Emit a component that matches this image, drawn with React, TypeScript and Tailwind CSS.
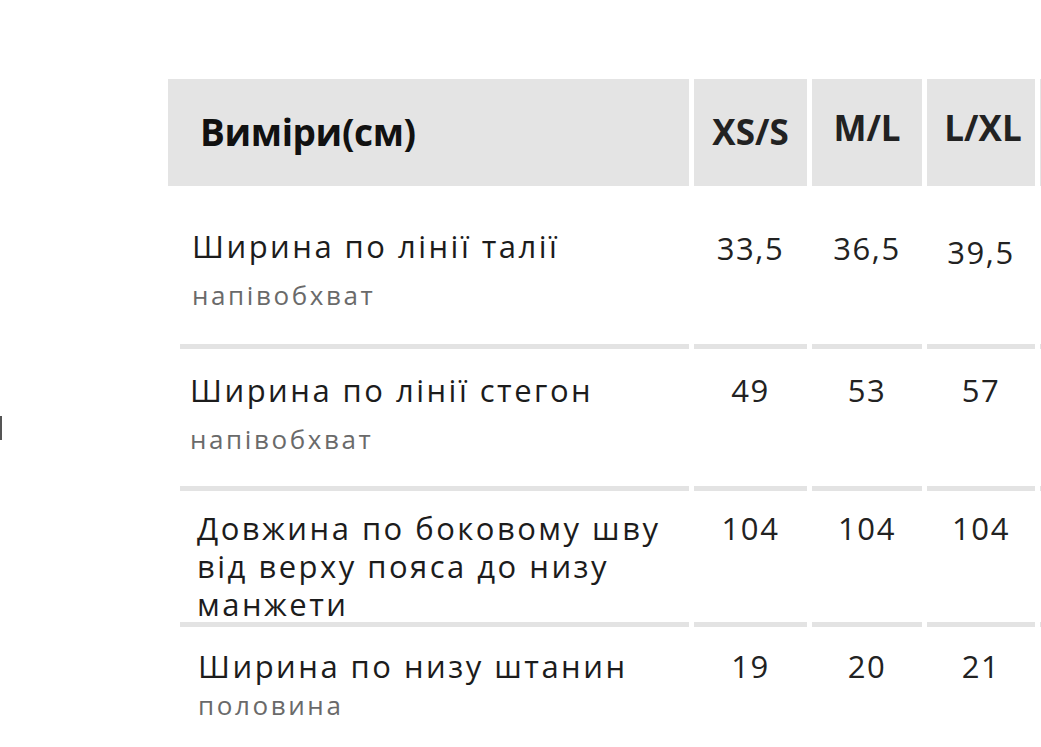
import React from 'react';

type Row = {
  lines: string[];
  sub?: string;
  values: string[];
  pt: string;
  pl: string;
  subGap: string;
  h: string;
  valuePt: string[];
};

const rows: Row[] = [
  { lines: ['Ширина по лінії талії'], sub: 'напівобхват', values: ['33,5', '36,5', '39,5'], pt: 'pt-[41px]', pl: 'pl-[24px]', subGap: 'mt-[15px]', h: 'h-[158px]', valuePt: ['pt-[43px]', 'pt-[43px]', 'pt-[47px]'] },
  { lines: ['Ширина по лінії стегон'], sub: 'напівобхват', values: ['49', '53', '57'], pt: 'pt-[22px]', pl: 'pl-[22px]', subGap: 'mt-[15px]', h: 'h-[137px]', valuePt: ['pt-[22px]', 'pt-[22px]', 'pt-[22px]'] },
  { lines: ['Довжина по боковому шву', 'від верху пояса до низу', 'манжети'], values: ['104', '104', '104'], pt: 'pt-[18px]', pl: 'pl-[29px]', subGap: '', h: 'h-[131px]', valuePt: ['pt-[18px]', 'pt-[18px]', 'pt-[18px]'] },
  { lines: ['Ширина по низу штанин'], sub: 'половина', values: ['19', '20', '21'], pt: 'pt-[20px]', pl: 'pl-[30px]', subGap: 'mt-[5px]', h: 'h-[130px]', valuePt: ['pt-[20px]', 'pt-[20px]', 'pt-[20px]'] },
];

const body = "font-['Open_Sans',sans-serif]";

export default function App() {
  return (
    <div className="w-[1041px] h-[747px] overflow-hidden bg-white flex">
      <div className="w-[168px] shrink-0 pt-[416px]">
        <div className="w-[2px] h-[24px] bg-[#555]" />
      </div>

      <div className="shrink-0 pt-[79px] grid grid-cols-[521px_113px_110px_108px_100px] gap-x-[5px] content-start">
        {/* header */}
        <div className="h-[107px] bg-[#e4e4e4] flex items-center pl-[32px] pb-[2px]">
          <span className={`${body} text-[37px] font-bold text-[#111] tracking-[-0.01em]`}>Виміри(см)</span>
        </div>
        <div className="h-[107px] bg-[#e4e4e4] flex items-center justify-center">
          <span className={`${body} text-[35px] font-bold text-[#222]`}>XS/S</span>
        </div>
        <div className="h-[107px] bg-[#e4e4e4] flex items-center justify-center pb-[8px]">
          <span className={`${body} text-[35px] font-bold text-[#222]`}>M/L</span>
        </div>
        <div className="h-[107px] bg-[#e4e4e4] flex items-center justify-center pb-[8px] pl-[4px]">
          <span className={`${body} text-[35px] font-bold text-[#222]`}>L/XL</span>
        </div>
        <div className="h-[107px] bg-[#e4e4e4]" />

        {rows.map((r, i) => (
          <React.Fragment key={i}>
            <div className={i > 0 ? 'border-t-[5px] border-[#e3e3e3] ml-[12px]' : ''}>
              <div className={`${r.h} ${r.pt} ${i > 0 ? '-ml-[12px]' : ''} ${r.pl}`}>
                {r.lines.map((l, j) => (
                  <div key={j} className={`${body} text-[31px] leading-[38px] text-[#1c1c1c] tracking-[0.08em] whitespace-nowrap`}>
                    {l}
                  </div>
                ))}
                {r.sub && (
                  <div className={`${body} ${r.subGap} text-[26px] leading-[31px] text-[#6a6a6a] tracking-[0.1em]`}>{r.sub}</div>
                )}
              </div>
            </div>
            {r.values.map((v, k) => (
              <div key={k} className={i > 0 ? 'border-t-[5px] border-[#e3e3e3]' : ''}>
                <div className={`${r.h} ${r.valuePt[k]} text-center ${body} text-[31px] leading-[38px] text-[#222] tracking-[0.05em]`}>
                  {v}
                </div>
              </div>
            ))}
            <div className={i > 0 ? 'border-t-[5px] border-[#e3e3e3]' : ''} />
          </React.Fragment>
        ))}
      </div>
    </div>
  );
}
